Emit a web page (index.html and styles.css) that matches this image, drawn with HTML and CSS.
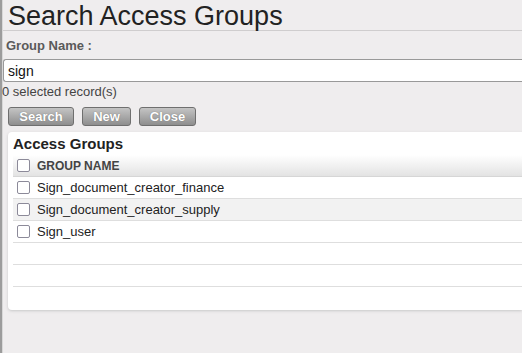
FILE: index.html
```html
<!DOCTYPE html>
<html lang="en">
<head>
    <meta charset="UTF-8">
    <title>Search Access Groups</title>
    <link rel="stylesheet" href="styles.css">
</head>
<body>
    <div class="page">
        <h1 class="page-title">Search Access Groups</h1>

        <div class="search-form">
            <label class="field-label" for="group-name">Group Name :</label>
            <input class="field-input" id="group-name" type="text" value="sign">
            <div class="selected-count">0 selected record(s)</div>

            <div class="form-buttons">
                <button class="btn btn-search">Search</button>
                <button class="btn btn-new">New</button>
                <button class="btn btn-close">Close</button>
            </div>
        </div>

        <div class="results-panel">
            <h2 class="panel-title">Access Groups</h2>
            <table class="results-table">
                <thead>
                    <tr>
                        <th><span class="check"></span>GROUP NAME</th>
                    </tr>
                </thead>
                <tbody>
                    <tr><td><span class="check"></span>Sign_document_creator_finance</td></tr>
                    <tr class="alt"><td><span class="check"></span>Sign_document_creator_supply</td></tr>
                    <tr><td><span class="check"></span>Sign_user</td></tr>
                    <tr><td>&nbsp;</td></tr>
                    <tr><td>&nbsp;</td></tr>
                </tbody>
            </table>
        </div>
    </div>
</body>
</html>
```

FILE: styles.css
```css
html, body {
    margin: 0;
    padding: 0;
    background-color: #efedee;
    overflow: hidden;
}

body {
    font-family: Arial, "Liberation Sans", sans-serif;
    color: #222;
}

.page {
    height: 353px;
    border-left: 2px solid #9c9c9c;
    box-shadow: inset 1px 0 0 #d8d8d8;
    padding-left: 1px;
}

.page-title {
    margin: 0;
    padding: 2px 0 0 5px;
    height: 28px;
    font-size: 27px;
    font-weight: normal;
    color: #222;
    line-height: 28px;
    border-bottom: 1px solid #cfcdce;
}

.search-form {
    padding-top: 7px;
}

.field-label {
    display: block;
    padding-left: 3px;
    font-size: 13px;
    font-weight: bold;
    color: #5a5a5a;
    line-height: 16px;
}

.field-input {
    display: block;
    box-sizing: border-box;
    width: 100%;
    height: 23px;
    margin: 5px 0 0 0;
    padding: 0 4px;
    border: 1px solid #999;
    border-right: none;
    border-radius: 3px 0 0 3px;
    background: #fff;
    font-family: Arial, "Liberation Sans", sans-serif;
    font-size: 14px;
    color: #111;
}

.selected-count {
    margin: 2px 0 0 -1px;
    font-size: 13px;
    color: #444;
    line-height: 16px;
}

.form-buttons {
    display: flex;
    gap: 8px;
    padding: 7px 0 0 5px;
}

.btn {
    height: 19px;
    padding: 0;
    border: 1px solid #6f6f6f;
    border-radius: 3px;
    background: linear-gradient(#c4c4c4, #8e8e8e);
    color: #fff;
    font-family: Arial, "Liberation Sans", sans-serif;
    font-size: 13px;
    font-weight: bold;
    line-height: 17px;
    text-shadow: 0 0 1px #666;
    cursor: pointer;
}

.btn-search { width: 66px; }
.btn-new { width: 49px; }
.btn-close { width: 57px; }

.results-panel {
    margin: 6px 0 0 5px;
    padding: 3px 0 23px 5px;
    background: #fff;
    border-radius: 4px 0 0 4px;
    box-shadow: 0 1px 3px #c8c8c8;
}

.panel-title {
    margin: 0;
    font-size: 15px;
    font-weight: bold;
    color: #222;
    line-height: 18px;
    padding-bottom: 2px;
}

.results-table {
    width: 100%;
    border-collapse: collapse;
}

.results-table th,
.results-table td {
    height: 21px;
    padding: 0 0 0 4px;
    text-align: left;
    border-bottom: 1px solid #dedede;
    vertical-align: middle;
}

.results-table th {
    font-size: 12px;
    font-weight: bold;
    color: #444;
    background: linear-gradient(#ffffff, #e3e3e3);
    border-bottom-color: #d6d6d6;
}

.results-table td {
    font-size: 13px;
    color: #222;
}

.results-table tr.alt td {
    background-color: #f2f2f2;
}

.check {
    display: inline-block;
    box-sizing: border-box;
    width: 13px;
    height: 13px;
    margin-right: 7px;
    border: 1px solid #8c8a99;
    border-radius: 2px;
    background: #fff;
    vertical-align: -2px;
}
```
